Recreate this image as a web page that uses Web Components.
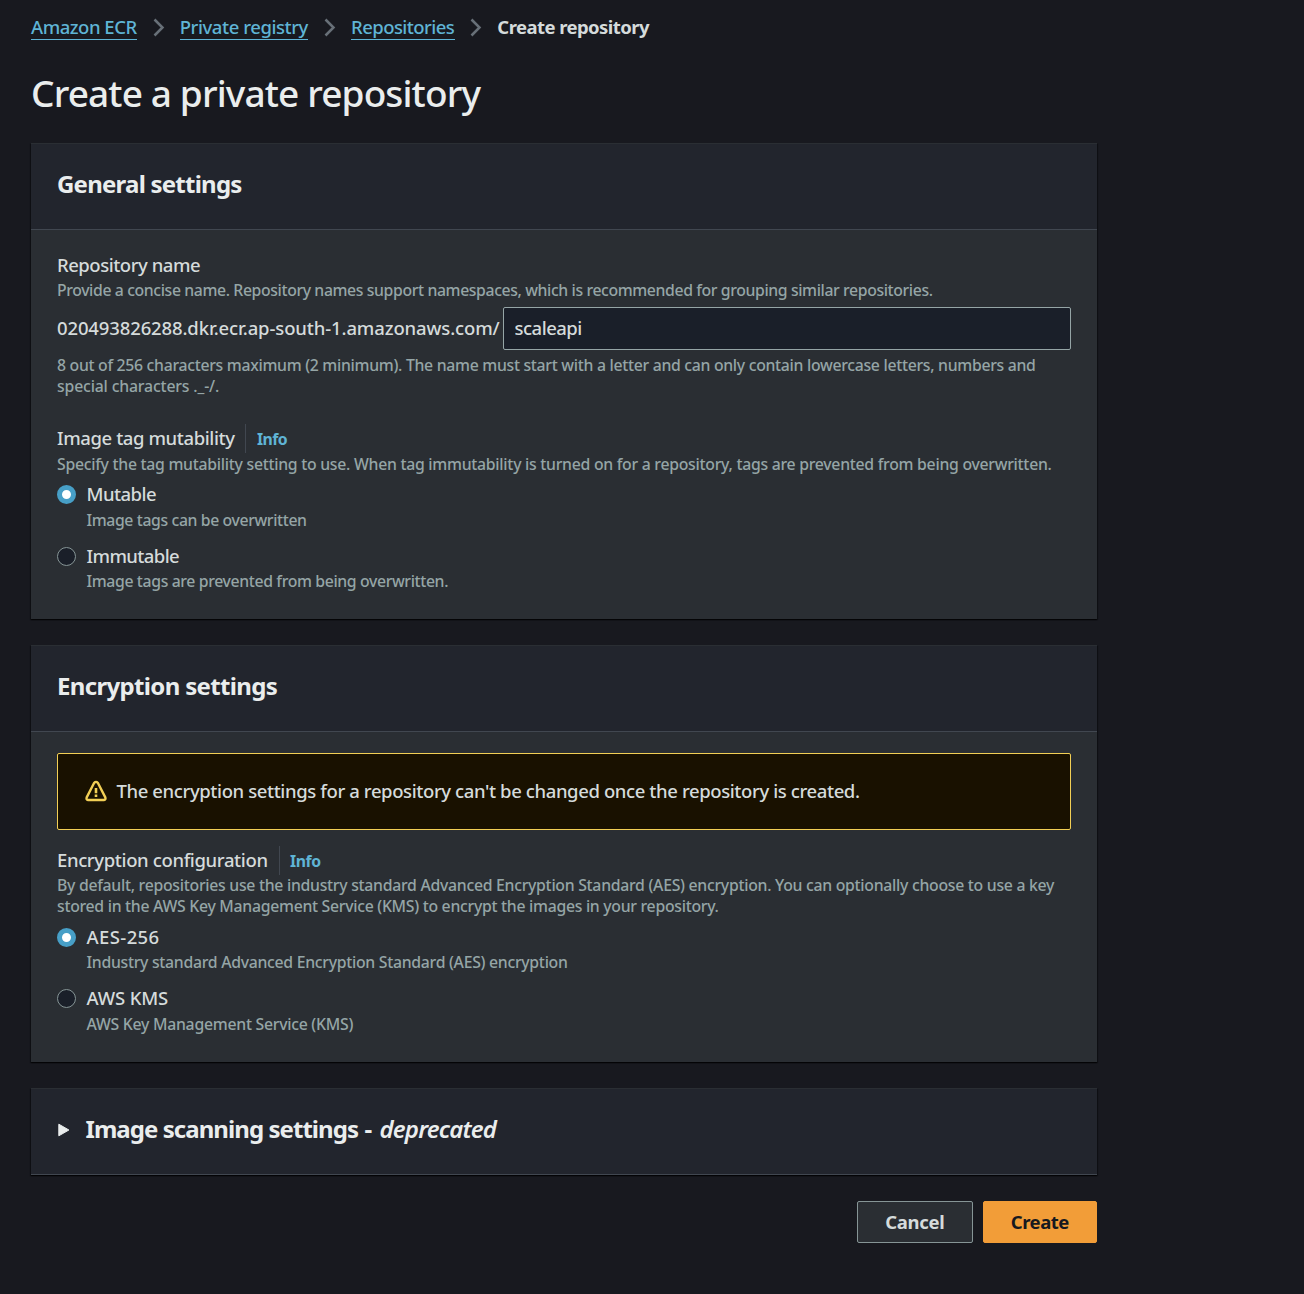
<!DOCTYPE html>
<html lang="en">
<head>
<meta charset="utf-8">
<title>Create repository</title>
<style>
html{background:#18191f}
body{margin:0;background:#18191f;color:#d5dbdb;font:500 18.5px/26px "Noto Sans","Open Sans",sans-serif}
</style>
</head>
<body>
<ecr-page>
  <ecr-breadcrumbs slot="crumbs">
    <ecr-crumb href="#"><ecr-text w="106">Amazon ECR</ecr-text></ecr-crumb>
    <ecr-crumb href="#"><ecr-text w="128.5">Private registry</ecr-text></ecr-crumb>
    <ecr-crumb href="#"><ecr-text w="103.5">Repositories</ecr-text></ecr-crumb>
    <ecr-crumb current><ecr-text w="152">Create repository</ecr-text></ecr-crumb>
  </ecr-breadcrumbs>
  <ecr-text slot="title" w="449.5">Create a private repository</ecr-text>

  <ecr-panel style="--h:389px;--pt:22px">
    <ecr-text slot="heading" w="185">General settings</ecr-text>
    <ecr-field>
      <ecr-text slot="label" w="143.5">Repository name</ecr-text>
      <ecr-text slot="desc" w="876">Provide a concise name. Repository names support namespaces, which is recommended for grouping similar repositories.</ecr-text>
      <ecr-url-input value="scaleapi"><ecr-text w="443">020493826288.dkr.ecr.ap-south-1.amazonaws.com/</ecr-text></ecr-url-input>
      <ecr-text slot="hint" w="979">8 out of 256 characters maximum (2 minimum). The name must start with a letter and can only contain lowercase letters, numbers and</ecr-text>
      <ecr-text slot="hint" w="162.5">special characters ._-/.</ecr-text>
    </ecr-field>
    <ecr-field style="margin-top:28px;--dg:3px">
      <ecr-text slot="label" w="178">Image tag mutability</ecr-text>
      <ecr-info slot="label"><ecr-text w="30.5">Info</ecr-text></ecr-info>
      <ecr-text slot="desc" w="995">Specify the tag mutability setting to use. When tag immutability is turned on for a repository, tags are prevented from being overwritten.</ecr-text>
      <ecr-radio checked style="margin-top:6px;--gap:3px"><ecr-text w="70">Mutable</ecr-text><ecr-text slot="desc" w="220.5">Image tags can be overwritten</ecr-text></ecr-radio>
      <ecr-radio style="margin-top:12px"><ecr-text w="93">Immutable</ecr-text><ecr-text slot="desc" w="362">Image tags are prevented from being overwritten.</ecr-text></ecr-radio>
    </ecr-field>
  </ecr-panel>

  <ecr-panel style="--h:330px;--pt:21px">
    <ecr-text slot="heading" w="220.5">Encryption settings</ecr-text>
    <ecr-alert><ecr-text w="743.5">The encryption settings for a repository can't be changed once the repository is created.</ecr-text></ecr-alert>
    <ecr-field style="margin-top:17px">
      <ecr-text slot="label" w="211">Encryption configuration</ecr-text>
      <ecr-info slot="label" style="margin-left:11px;padding-left:10px"><ecr-text w="31">Info</ecr-text></ecr-info>
      <ecr-text slot="desc" w="997.5">By default, repositories use the industry standard Advanced Encryption Standard (AES) encryption. You can optionally choose to use a key</ecr-text>
      <ecr-text slot="desc" w="662">stored in the AWS Key Management Service (KMS) to encrypt the images in your repository.</ecr-text>
      <ecr-radio checked style="margin-top:7px"><ecr-text w="73.5">AES-256</ecr-text><ecr-text slot="desc" w="481.5">Industry standard Advanced Encryption Standard (AES) encryption</ecr-text></ecr-radio>
      <ecr-radio style="margin-top:12px;--gap:3px"><ecr-text w="82">AWS KMS</ecr-text><ecr-text slot="desc" w="267">AWS Key Management Service (KMS)</ecr-text></ecr-radio>
    </ecr-field>
  </ecr-panel>

  <ecr-panel collapsed>
    <ecr-text slot="heading" w="273">Image scanning settings</ecr-text>
    <ecr-text slot="heading" w="9" style="margin-left:6px">-</ecr-text>
    <ecr-text slot="heading" w="117" style="margin-left:6px;font-style:italic;font-weight:600">deprecated</ecr-text>
  </ecr-panel>

  <ecr-button slot="actions" style="width:116px"><ecr-text w="59.5">Cancel</ecr-text></ecr-button>
  <ecr-button slot="actions" primary style="width:114px"><ecr-text w="58.5">Create</ecr-text></ecr-button>
</ecr-page>

<script>
const define = (name, html, setup) => {
  const t = document.createElement('template');
  t.innerHTML = html;
  customElements.define(name, class extends HTMLElement {
    constructor() {
      super();
      this.attachShadow({ mode: 'open' }).append(t.content.cloneNode(true));
    }
    connectedCallback() { if (setup) setup(this, this.shadowRoot); }
  });
};

define('ecr-page', `<style>
  :host{display:block;box-sizing:border-box;min-height:1294px;width:1304px;padding:14px 0 0 31px}
  main{width:1066px;display:flex;flex-direction:column}
  h1{margin:26px 0 23px;font-weight:500;font-size:37px;line-height:54px;height:54px;color:#eaeded;display:flex}
  .panels{display:flex;flex-direction:column;gap:26px}
  .actions{display:flex;justify-content:flex-end;gap:10px;margin-top:26px}
</style><main><slot name="crumbs"></slot><h1><slot name="title"></slot></h1><div class="panels"><slot></slot></div><div class="actions"><slot name="actions"></slot></div></main>`);

define('ecr-breadcrumbs', `<style>:host{display:flex;height:26px;align-items:flex-start}</style><slot></slot>`);

define('ecr-crumb', `<style>
  :host{display:flex;align-items:flex-start;color:#5fb4d5}
  :host([current]){color:#d5dbdb;font-weight:700}
  a{display:block;box-sizing:border-box;height:26px;border-bottom:1px solid #5fb4d5;color:inherit}
  :host([current]) a{border:0}
  svg{display:block;margin:4px 15.2px 0 15.6px}
  :host([current]) svg{display:none}
</style><a><slot></slot></a><svg width="12" height="19" viewBox="0 0 12 19" fill="none" stroke="#687078" stroke-width="2.5"><path d="M1.5 1.5 9.5 9.5l-8 8"/></svg>`);

define('ecr-panel', `<style>
  :host{display:block;background:#2a2e33;box-shadow:0 1px 1px rgba(0,0,0,.55),1px 1px 1px rgba(0,0,0,.3),-1px 1px 1px rgba(0,0,0,.3)}
  header{box-sizing:border-box;height:87px;border-top:1px solid #2a2e33;border-bottom:1px solid #414750;background:#22252d;padding:0 26px;display:flex;align-items:center}
  h2{margin:0 0 5px;display:flex;font-weight:700;font-size:24px;line-height:34px;color:#eaeded}
  section{box-sizing:border-box;height:var(--h);padding:var(--pt) 26px 0}
  svg{display:none;margin:0 15.5px 3px 1px}
  :host([collapsed]) section{display:none}
  :host([collapsed]) svg{display:block}
</style><header><svg width="12" height="14" viewBox="0 0 12 14"><path d="M.8 1.2v11.6L10.9 7z" fill="#eaeded" stroke="#eaeded" stroke-linejoin="round"/></svg><h2><slot name="heading"></slot></h2></header><section><slot></slot></section>`);

define('ecr-field', `<style>
  :host{display:block}
  .label{display:flex;height:26px}
  .desc{display:flex;flex-direction:column;margin-top:var(--dg,2px);font-size:15.8px;line-height:21px;color:#95a5a6}
  .hint{display:flex;flex-direction:column;margin-top:5px;font-size:15.8px;line-height:21px;color:#95a5a6}
</style><div class="label"><slot name="label"></slot></div><div class="desc"><slot name="desc"></slot></div><slot></slot><div class="hint"><slot name="hint"></slot></div>`);

define('ecr-info', `<style>
  :host{display:block;box-sizing:border-box;height:29px;margin:-1px 0 -2px 10px;padding:1px 0 0 11px;border-left:1px solid #414750;color:#5fb4d5;font-weight:700;font-size:15.8px;line-height:28px}
</style><slot></slot>`);

define('ecr-url-input', `<style>
  :host{display:flex;align-items:center;height:43px;margin-top:6px}
  ::slotted(ecr-text){margin-bottom:2px}
  input{box-sizing:border-box;height:43px;width:568px;margin:0 0 0 3px;padding:0 10.5px 2px;border:1px solid #95a5a6;border-radius:2px;background:#1a1f29;color:#d5dbdb;font:inherit;letter-spacing:-.5px;outline:0}
</style><slot></slot><input type="text">`, (el, root) => {
  root.querySelector('input').value = el.getAttribute('value');
});

define('ecr-radio', `<style>
  :host{display:flex;align-items:flex-start}
  i{box-sizing:border-box;flex:none;width:19px;height:19px;margin:4px 10.5px 0 0;border:1.5px solid #869596;border-radius:50%;background:#1a1f29}
  :host([checked]) i{border:5.5px solid #479fc7;background:#fff}
  .d{margin-top:var(--gap,2px);font-size:15.8px;line-height:21px;color:#95a5a6;display:flex}
  .l{display:flex;height:26px}
</style><i></i><div><div class="l"><slot></slot></div><div class="d"><slot name="desc"></slot></div></div>`);

define('ecr-alert', `<style>
  :host{display:flex;box-sizing:border-box;height:77px;align-items:center;padding:0 0 2px 26.5px;border:1px solid #f2cf55;border-radius:2px;background:#191100}
  svg{margin-right:10px;flex:none}
</style><svg width="22" height="22" viewBox="0 0 22 22" fill="none" stroke="#f2cf55" stroke-width="2.4" stroke-linejoin="round"><path d="M9.2 2.8Q11 .9 12.8 2.8L20.3 17.4Q21 20 19.1 20H2.9Q1 20 1.7 17.4Z"/><path d="M11 8v5.2M11 14.6v2.4" stroke-width="2.6"/></svg><slot></slot>`);

define('ecr-button', `<style>
  :host{display:flex;box-sizing:border-box;height:42px;align-items:center;justify-content:center;border:1px solid #869596;border-radius:2px;background:#2a2e33;color:#d5dbdb;font-weight:700}
  :host([primary]){border-color:#f29d38;background:#f29d38;color:#16191f}
</style><slot></slot>`);

/* One line of text, tracked so that it fills the width given in "w". */
define('ecr-text', `<style>
  :host{display:block;white-space:nowrap;flex:none}
  span{display:inline-block}
</style><span><slot></slot></span>`, (el, root) => {
  const w = +el.getAttribute('w'), s = root.querySelector('span');
  el.style.width = w + 'px';
  requestAnimationFrame(() => {
    const n = el.textContent.length;
    s.style.letterSpacing = (w - .4 - s.getBoundingClientRect().width) / n + 'px';
  });
});
</script>
</body>
</html>
